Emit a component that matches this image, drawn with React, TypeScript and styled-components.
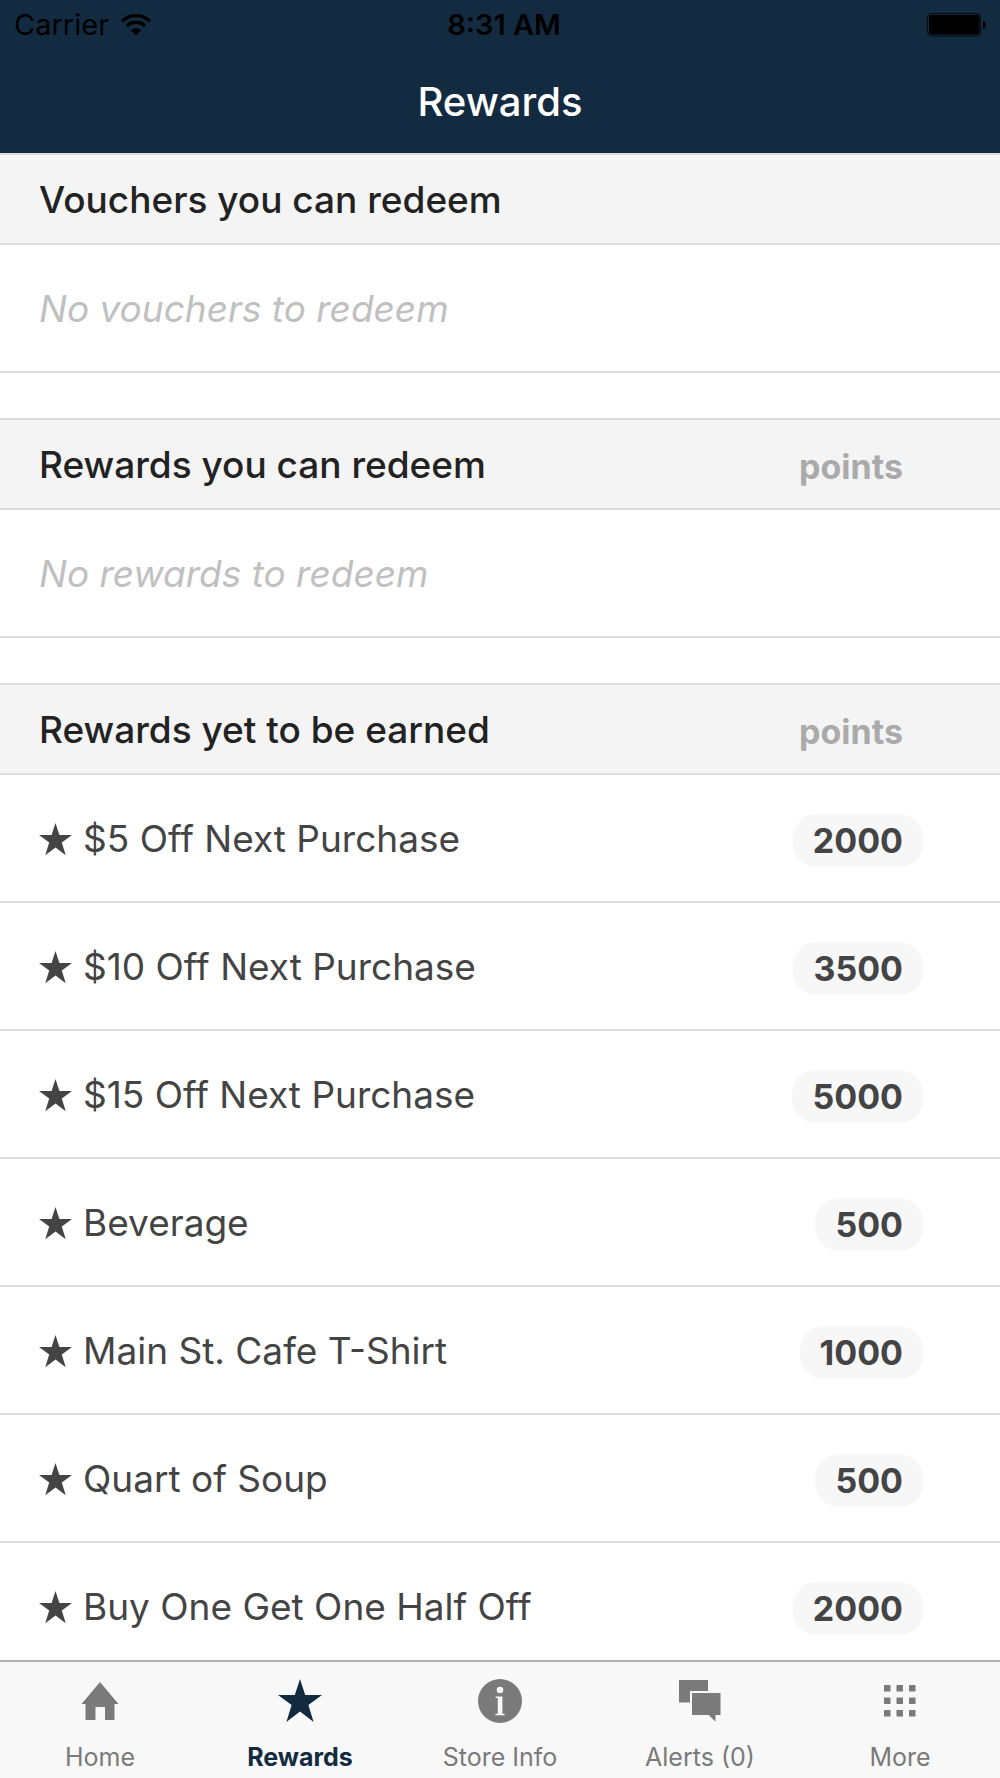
import React from "react";
import styled, { createGlobalStyle } from "styled-components";

const navy = "#132b40";
const line = "#dcdcdc";

const GlobalStyle = createGlobalStyle`
  *, *::before, *::after { box-sizing: border-box; }
  body { margin: 0; background: #fff; }
  h1, h2, p, ul { margin: 0; padding: 0; }
  ul { list-style: none; }
`;

const Screen = styled.div`
  display: flex;
  flex-direction: column;
  height: 100vh;
  font-family: Inter, "Liberation Sans", sans-serif;
  color: #444;
  background: #fff;
`;

const Header = styled.header`
  flex: none;
  background: ${navy};
`;

const StatusBar = styled.div`
  display: grid;
  grid-template-columns: 1fr auto 1fr;
  align-items: center;
  height: 50px;
  padding: 0 14px;
  font-size: 29px;
  line-height: 50px;
  color: #000;
`;

const Carrier = styled.span`
  display: flex;
  align-items: center;
  gap: 12px;
`;

const Time = styled.time`
  padding-left: 8px;
  font-weight: 600;
`;

const BatteryIcon = styled.svg`
  justify-self: end;
`;

const Title = styled.h1`
  height: 103px;
  font-size: 40px;
  font-weight: 500;
  line-height: 103px;
  text-align: center;
  color: #fff;
`;

const Content = styled.main`
  flex: 1;
  min-height: 0;
  overflow: hidden;
  display: flex;
  flex-direction: column;
  gap: 45px;
`;

const Section = styled.section`
  flex: none;
`;

const SectionHeader = styled.div`
  display: flex;
  align-items: center;
  justify-content: space-between;
  height: 92px;
  padding: 2px 97px 0 39px;
  background: #f4f4f4;
  border-top: 2px solid ${line};
  border-bottom: 2px solid ${line};
`;

const SectionTitle = styled.h2`
  font-size: 37px;
  font-weight: 500;
  line-height: 48px;
  color: #222;
`;

const Unit = styled.span`
  padding-top: 3px;
  font-size: 34px;
  font-weight: 700;
  line-height: 40px;
  color: #aaa;
`;

const Row = styled.li`
  display: flex;
  align-items: center;
  gap: 11px;
  height: 128px;
  padding: 2px 77px 0 39px;
  border-bottom: 2px solid ${line};
  font-size: 37px;
  line-height: 48px;
`;

const Empty = styled.p`
  height: 128px;
  padding: 40px 39px 0;
  border-bottom: 2px solid ${line};
  font-size: 37px;
  font-style: italic;
  line-height: 48px;
  color: #c0c0c0;
`;

const Name = styled.span`
  flex: 1;
`;

const Badge = styled.span`
  margin-top: 2px;
  padding: 7px 20px 6px;
  border-radius: 24px;
  background: #f7f7f7;
  font-size: 34px;
  font-weight: 700;
  line-height: 40px;
`;

const TabBar = styled.nav`
  flex: none;
  display: grid;
  grid-template-columns: repeat(5, 1fr);
  height: 118px;
  background: #f8f8f8;
  border-top: 2px solid #b2b2b2;
`;

const Tab = styled.a<{ $active: boolean }>`
  display: flex;
  flex-direction: column;
  align-items: center;
  gap: 18px;
  padding-top: 17px;
  font-size: 25px;
  font-weight: ${(p) => (p.$active ? 700 : 400)};
  line-height: 32px;
  color: ${(p) => (p.$active ? navy : "#7a7a7a")};
  text-decoration: none;
  white-space: nowrap;
`;

const TabIcon = styled.svg`
  display: block;
  fill: currentColor;
`;

const starPoints =
  "22,0 27.2,16 44,16 30.4,26 35.6,43 22,32.6 8.4,43 13.6,26 0,16 16.8,16";

const Star = ({ size }: { size: number }) => (
  <svg width={size} height={size} viewBox="0 0 44 44" fill="currentColor" aria-hidden="true">
    <polygon points={starPoints} />
  </svg>
);

const HomeShape = () => (
  <path d="M22 3 40.500 25H36.500V41H27V28H17.500V41H7.500V25H3.500Z" />
);

const StarShape = () => <polygon points={starPoints} />;

const InfoShape = () => (
  <>
    <circle cx="22" cy="22" r="22" />
    <g fill="#f8f8f8">
      <circle cx="22" cy="11" r="3.3" />
      <path d="M17.6 17.500H24.4V34.700H26.6V36.300H17.4V34.700H19.8V19.100H17.6Z" />
    </g>
  </>
);

const AlertsShape = () => (
  <>
    <path d="M1 1H30V12H12V23.500H1Z" />
    <path d="M14 14H42.500V36H37.500V42.500L30.500 36H14Z" />
  </>
);

const MoreShape = () => (
  <>
    {[6, 18.5, 31].map((y) =>
      [6, 18.5, 31].map((x) => (
        <rect key={`${x}-${y}`} x={x} y={y} width="6.500" height="6.500" rx="0.6" />
      ))
    )}
  </>
);

const rewards = [
  { name: "$5 Off Next Purchase", points: 2000 },
  { name: "$10 Off Next Purchase", points: 3500 },
  { name: "$15 Off Next Purchase", points: 5000 },
  { name: "Beverage", points: 500 },
  { name: "Main St. Cafe T-Shirt", points: 1000 },
  { name: "Quart of Soup", points: 500 },
  { name: "Buy One Get One Half Off", points: 2000 },
];

const tabs = [
  { label: "Home", href: "#home", Shape: HomeShape },
  { label: "Rewards", href: "#rewards", Shape: StarShape },
  { label: "Store Info", href: "#store-info", Shape: InfoShape },
  { label: "Alerts (0)", href: "#alerts", Shape: AlertsShape },
  { label: "More", href: "#more", Shape: MoreShape },
];

export default function App() {
  return (
    <Screen>
      <GlobalStyle />
      <Header>
        <StatusBar>
          <Carrier>
            Carrier
            <svg width="30" height="22" viewBox="0 0 30 22" aria-hidden="true">
              <g fill="none" stroke="#000" strokeWidth="3.4">
                <path d="M1.200 7.200A19.600 19.600 0 0 1 28.800 7.200" />
                <path d="M5.900 12A13 13 0 0 1 24.100 12" />
              </g>
              <path d="M15 21.500 9.800 16.300A7.400 7.400 0 0 1 20.200 16.300Z" />
            </svg>
          </Carrier>
          <Time>8:31 AM</Time>
          <BatteryIcon width="59" height="24" viewBox="0 0 59 24" aria-hidden="true">
            <rect x="0.500" y="0.500" width="53" height="22.500" rx="4" fill="none" stroke="#050b11" />
            <rect x="2" y="2" width="50.500" height="19.500" rx="2" />
            <path d="M56 8Q59 9 59 12T56 16Z" />
          </BatteryIcon>
        </StatusBar>
        <Title>Rewards</Title>
      </Header>
      <Content>
        <Section>
          <SectionHeader>
            <SectionTitle>Vouchers you can redeem</SectionTitle>
          </SectionHeader>
          <Empty>No vouchers to redeem</Empty>
        </Section>
        <Section>
          <SectionHeader>
            <SectionTitle>Rewards you can redeem</SectionTitle>
            <Unit>points</Unit>
          </SectionHeader>
          <Empty>No rewards to redeem</Empty>
        </Section>
        <Section>
          <SectionHeader>
            <SectionTitle>Rewards yet to be earned</SectionTitle>
            <Unit>points</Unit>
          </SectionHeader>
          <ul>
            {rewards.map((reward) => (
              <Row key={reward.name}>
                <Star size={33} />
                <Name>{reward.name}</Name>
                <Badge>{reward.points}</Badge>
              </Row>
            ))}
          </ul>
        </Section>
      </Content>
      <TabBar>
        {tabs.map(({ label, href, Shape }) => {
          const active = label === "Rewards";
          return (
            <Tab key={label} href={href} $active={active} aria-current={active ? "page" : undefined}>
              <TabIcon width="44" height="44" viewBox="0 0 44 44" aria-hidden="true">
                <Shape />
              </TabIcon>
              {label}
            </Tab>
          );
        })}
      </TabBar>
    </Screen>
  );
}
